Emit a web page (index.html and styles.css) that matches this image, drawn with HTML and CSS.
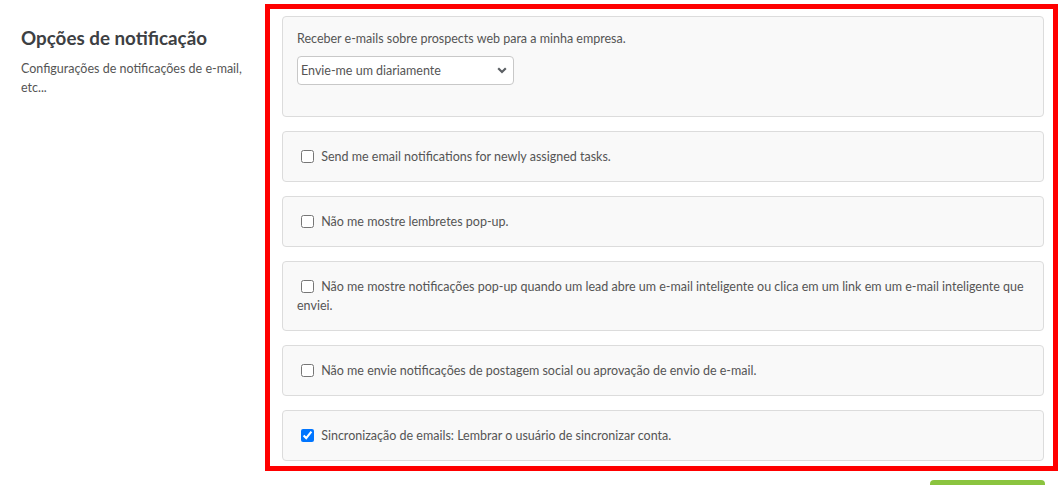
FILE: index.html
```html
<!DOCTYPE html>
<html lang="pt-BR">
<head>
    <meta charset="UTF-8">
    <meta name="viewport" content="width=device-width, initial-scale=1.0">
    <title>Opções de notificação</title>
    <link rel="stylesheet" href="styles.css">
</head>
<body>
    <div class="page">
        <div class="side">
            <h2>Opções de notificação</h2>
            <p>Configurações de notificações de e-mail, etc...</p>
        </div>

        <div class="main">
            <div class="marked">
                <div class="card card-select">
                    <label class="field-label" for="prospects">Receber e-mails sobre prospects web para a minha empresa.</label>
                    <div class="select-wrap">
                        <select id="prospects">
                            <option>Envie-me um diariamente</option>
                            <option>Envie-me um por semana</option>
                            <option>Não me envie</option>
                        </select>
                        <svg class="chevron" width="10" height="7" viewBox="0 0 10 7">
                            <path d="M1.2 1.3 L5 5 L8.8 1.3" fill="none" stroke="#5b5f63" stroke-width="2.2"/>
                        </svg>
                    </div>
                </div>

                <div class="card">
                    <label><input type="checkbox"> Send me email notifications for newly assigned tasks.</label>
                </div>

                <div class="card">
                    <label><input type="checkbox"> Não me mostre lembretes pop-up.</label>
                </div>

                <div class="card">
                    <label><input type="checkbox"> Não me mostre notificações pop-up quando um lead abre um e-mail inteligente ou clica em um link em um e-mail inteligente que enviei.</label>
                </div>

                <div class="card">
                    <label><input type="checkbox"> Não me envie notificações de postagem social ou aprovação de envio de e-mail.</label>
                </div>

                <div class="card">
                    <label><input type="checkbox" checked> Sincronização de emails: Lembrar o usuário de sincronizar conta.</label>
                </div>
            </div>

            <div class="actions">
                <!-- only the top edge of the save button is in view -->
                <button class="save" aria-label="Salvar"></button>
            </div>
        </div>
    </div>
</body>
</html>
```

FILE: styles.css
```css
body {
    margin: 0;
    font-family: Lato, "Open Sans", sans-serif;
    font-size: 12.5px;
    line-height: 19px;
    color: #555;
    background: #fff;
}
.page {
    display: flex;
    align-items: flex-start;
}
.side {
    width: 224px;
    padding: 28px 20px 0 21px;
    flex-shrink: 0;
}
.side h2 {
    margin: 0 0 12px;
    font-size: 18.8px;
    line-height: 20px;
    font-weight: 700;
    color: #3d4043;
}
.side p {
    margin: 0;
    line-height: 18.5px;
    color: #555;
}
.main {
    width: 793px;
    padding-top: 4px;
}
.marked {
    border: 5px solid #ff0000;
    padding: 7px 9px 5px 12px;
    display: flex;
    flex-direction: column;
    gap: 14px;
}
.card {
    background-color: #f9f9f9;
    border: 1px solid #dcdcdc;
    border-radius: 4px;
    padding: 15px 14px;
}
.card-select {
    padding-top: 12px;
}
.card label {
    display: block;
}
.card input[type="checkbox"] {
    width: 13px;
    height: 13px;
    margin: 0 4px 0 4px;
    vertical-align: -2px;
}
.field-label {
    margin-bottom: 8px;
}
.select-wrap {
    position: relative;
    width: 217px;
    margin-bottom: 16px;
}
.select-wrap select {
    appearance: none;
    width: 217px;
    height: 29px;
    padding: 0 20px 0 3px;
    border: 1px solid #c8c8c8;
    border-radius: 4px;
    background: #fff;
    font-family: Lato, "Open Sans", sans-serif;
    font-size: 12.5px;
    color: #555;
}
.chevron {
    position: absolute;
    right: 7px;
    top: 11px;
    pointer-events: none;
}
.actions {
    display: flex;
    justify-content: flex-end;
    padding: 9px 13px 0 0;
}
.save {
    width: 115px;
    height: 36px;
    border: none;
    border-radius: 4px;
    background-color: #8bc43f;
    cursor: pointer;
}
```
